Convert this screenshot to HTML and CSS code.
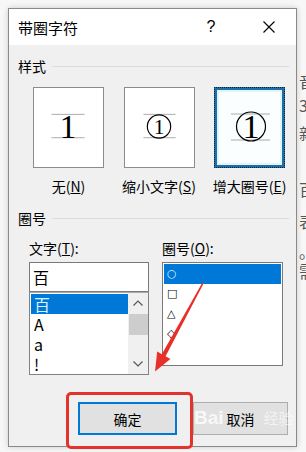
FILE: index.html
```html
<!DOCTYPE html>
<html lang="zh-CN">
<head>
    <meta charset="UTF-8">
    <title>带圈字符</title>
    <link rel="stylesheet" href="styles.css">
</head>
<body>
    <div class="page">
        <div class="dialog">
            <div class="titlebar">
                <span class="title">带圈字符</span>
                <span class="help">?</span>
                <span class="close">
                    <svg viewBox="0 0 12 12" width="12" height="12">
                        <path d="M0.5 0.5L11.5 11.5M11.5 0.5L0.5 11.5" stroke="#000" stroke-width="1.1" fill="none"/>
                    </svg>
                </span>
            </div>

            <div class="content">
                <div class="group-head"><span>样式</span><i></i></div>

                <div class="styles">
                    <div class="style-item">
                        <div class="style-box">
                            <svg viewBox="0 0 71 81" width="69" height="79">
                                <line x1="18" y1="27" x2="52" y2="27" stroke="#aaa"/>
                                <line x1="18" y1="51" x2="52" y2="51" stroke="#aaa"/>
                                <text x="35" y="51" text-anchor="middle" class="glyph">1</text>
                            </svg>
                        </div>
                        <div class="style-label">无(<u>N</u>)</div>
                    </div>
                    <div class="style-item">
                        <div class="style-box">
                            <svg viewBox="0 0 71 81" width="69" height="79">
                                <line x1="19" y1="27" x2="52" y2="27" stroke="#aaa"/>
                                <line x1="19" y1="51" x2="52" y2="51" stroke="#aaa"/>
                                <circle cx="35" cy="39.5" r="12" stroke="#000" stroke-width="1.2" fill="none"/>
                                <text x="35" y="47" text-anchor="middle" class="glyph small">1</text>
                            </svg>
                        </div>
                        <div class="style-label">缩小文字(<u>S</u>)</div>
                    </div>
                    <div class="style-item">
                        <div class="style-box selected">
                            <svg viewBox="0 0 65 75" width="65" height="75">
                                <line x1="14" y1="24" x2="53" y2="24" stroke="#aaa"/>
                                <line x1="14" y1="50" x2="53" y2="50" stroke="#aaa"/>
                                <circle cx="34" cy="36.5" r="14.5" stroke="#000" stroke-width="1.2" fill="none"/>
                                <text x="34" y="48" text-anchor="middle" class="glyph">1</text>
                            </svg>
                        </div>
                        <div class="style-label">增大圈号(<u>E</u>)</div>
                    </div>
                </div>

                <div class="group-head second"><span>圈号</span><i></i></div>

                <div class="columns">
                    <div class="col-text">
                        <div class="field-label">文字(<u>T</u>):</div>
                        <div class="text-input">百</div>
                        <div class="listbox">
                            <div class="list-items">
                                <div class="item active">百</div>
                                <div class="item">A</div>
                                <div class="item">a</div>
                                <div class="item">!</div>
                            </div>
                            <div class="scrollbar">
                                <svg viewBox="0 0 10 6" width="10" height="6">
                                    <path d="M0.5 5.5L5 1L9.5 5.5" stroke="#555" stroke-width="1.2" fill="none"/>
                                </svg>
                                <div class="thumb"></div>
                                <svg class="down" viewBox="0 0 10 6" width="10" height="6">
                                    <path d="M0.5 0.5L5 5L9.5 0.5" stroke="#555" stroke-width="1.2" fill="none"/>
                                </svg>
                            </div>
                        </div>
                    </div>
                    <div class="col-circle">
                        <div class="field-label">圈号(<u>O</u>):</div>
                        <div class="circle-list">
                            <div class="sym active">○</div>
                            <div class="sym">□</div>
                            <div class="sym">△</div>
                            <div class="sym">◇</div>
                        </div>
                    </div>
                </div>

                <div class="buttons">
                    <button class="btn default">确定</button>
                    <button class="btn">取消</button>
                </div>
            </div>
        </div>

        <div class="doc">
            <span style="margin-top: 72px">音</span>
            <span style="margin-top: 6px">3</span>
            <span style="margin-top: 10px">新</span>
            <span style="margin-top: 38px">百</span>
            <span style="margin-top: 14px">表</span>
            <span style="margin-top: 12px">。</span>
            <span style="margin-top: 2px">需</span>
        </div>

        <!-- 标注 -->
        <div class="mark-box"></div>
        <svg class="mark-arrow" viewBox="0 0 306 452" width="306" height="452">
            <polygon points="203.6,283.4 165.6,356.3 170.4,358.9 155,371.5 157.2,351.6 161.8,354.2 202.4,282.6" fill="#e8302a"/>
        </svg>
        <div class="watermark"><b>Bai</b><span>经验</span></div>
    </div>
</body>
</html>
```

FILE: styles.css
```css
* {
    margin: 0;
    padding: 0;
    box-sizing: border-box;
}

body {
    font-family: "Noto Sans CJK SC", "Noto Sans", sans-serif;
    background: #f7f7f7;
    color: #000;
    width: 306px;
    height: 452px;
    overflow: hidden;
}

.page {
    position: relative;
    display: flex;
    width: 306px;
    height: 452px;
}

.dialog {
    margin: 8px 0 0 8px;
    width: 289px;
    height: 439px;
    border: 1px solid #8a8a8a;
    background: #f0f0f0;
    box-shadow: 0 0 6px rgba(0, 0, 0, 0.18);
    flex-shrink: 0;
}

.titlebar {
    height: 36px;
    background: #fff;
    display: flex;
    align-items: center;
    padding: 0 4px 0 9px;
}

.title {
    flex: 1;
    font-size: 15px;
}

.help {
    width: 30px;
    text-align: center;
    font-size: 16px;
    font-family: "Liberation Sans", sans-serif;
    margin-right: 20px;
}

.close {
    width: 46px;
    display: flex;
    justify-content: center;
}

.content {
    padding-top: 11px;
}

.group-head {
    display: flex;
    align-items: center;
    height: 20px;
    padding: 0 7px 0 9px;
    font-size: 14px;
}

.group-head i {
    flex: 1;
    height: 1px;
    background: #dcdcdc;
    margin-left: 6px;
}

.group-head.second {
    margin-top: 12px;
}

.styles {
    display: flex;
    gap: 19.5px;
    padding-left: 24px;
    margin-top: 11px;
}

.style-item {
    width: 71px;
    display: flex;
    flex-direction: column;
    align-items: center;
}

.style-box {
    position: relative;
    width: 71px;
    height: 81px;
    border: 1px solid #8c8c8c;
    background: #fff;
}

.style-box.selected {
    border: 3px solid #1f6fa6;
    box-shadow: inset 0 0 0 2px #dff4fb;
    background: #fbfeff;
}

.style-box.selected::before {
    content: "";
    position: absolute;
    inset: -3px;
    border: 1px dotted #0c2438;
}

.glyph {
    font-family: "Liberation Serif", serif;
    font-size: 34px;
    fill: #000;
}

.glyph.small {
    font-size: 22px;
}

.style-label {
    margin-top: 8px;
    height: 20px;
    line-height: 20px;
    font-size: 14px;
    white-space: nowrap;
}

.columns {
    display: flex;
    padding-left: 20px;
    margin-top: 10px;
}

.col-text {
    width: 120px;
}

.col-circle {
    width: 121px;
    margin-left: 13px;
}

.field-label {
    height: 20px;
    line-height: 20px;
    font-size: 14px;
    margin-bottom: 4px;
}

.text-input {
    height: 30px;
    border: 1px solid #7a7a7a;
    background: #fff;
    font-size: 16px;
    line-height: 28px;
    padding-left: 3px;
}

.listbox {
    display: flex;
    height: 83px;
    border: 1px solid #828282;
    border-top-color: #aaa;
    background: #fff;
}

.list-items {
    flex: 1;
    padding-top: 1px;
}

.item {
    height: 20px;
    line-height: 20px;
    font-size: 16px;
    padding-left: 3px;
    margin-left: 1px;
}

.item.active {
    background: #0078d7;
    color: #d7f3ff;
}

.scrollbar {
    width: 20px;
    background: #f0f0f0;
    display: flex;
    flex-direction: column;
    align-items: center;
    padding-top: 7px;
}

.thumb {
    width: 19px;
    height: 21px;
    background: #cdcdcd;
    margin-top: 8px;
}

.scrollbar .down {
    margin-top: auto;
    margin-bottom: 7px;
}

.circle-list {
    height: 104px;
    border: 1px solid #7a7a7a;
    background: #fff;
    padding: 1px 1px 0;
}

.sym {
    height: 20px;
    line-height: 20px;
    font-size: 11px;
    padding-left: 3px;
    font-family: "DejaVu Sans", sans-serif;
}

.sym.active {
    background: #0078d7;
    color: #d7f3ff;
}

.buttons {
    display: flex;
    gap: 16px;
    padding-left: 69px;
    margin-top: 27px;
}

.btn {
    width: 95px;
    height: 33px;
    background: #e1e1e1;
    border: 1px solid #adadad;
    font-family: "Noto Sans CJK SC", sans-serif;
    font-size: 14px;
    color: #000;
}

.btn.default {
    width: 99px;
    border: 2px solid #0078d7;
}

.doc {
    display: flex;
    flex-direction: column;
    padding-left: 2px;
    font-size: 16px;
    line-height: 18px;
    color: #555;
}

.mark-box {
    position: absolute;
    left: 66px;
    top: 392px;
    width: 127px;
    height: 57px;
    border: 3px solid #e2342c;
    border-radius: 5px;
}

.mark-arrow {
    position: absolute;
    left: 0;
    top: 0;
}

.watermark {
    position: absolute;
    left: 194px;
    top: 406px;
    color: rgba(255, 255, 255, 0.8);
    font-family: "Liberation Sans", sans-serif;
    font-size: 19px;
    line-height: 24px;
    white-space: nowrap;
}

.watermark span {
    font-family: "Noto Sans CJK SC", sans-serif;
    font-size: 15px;
    margin-left: 40px;
    color: rgba(255, 255, 255, 0.6);
}
```
